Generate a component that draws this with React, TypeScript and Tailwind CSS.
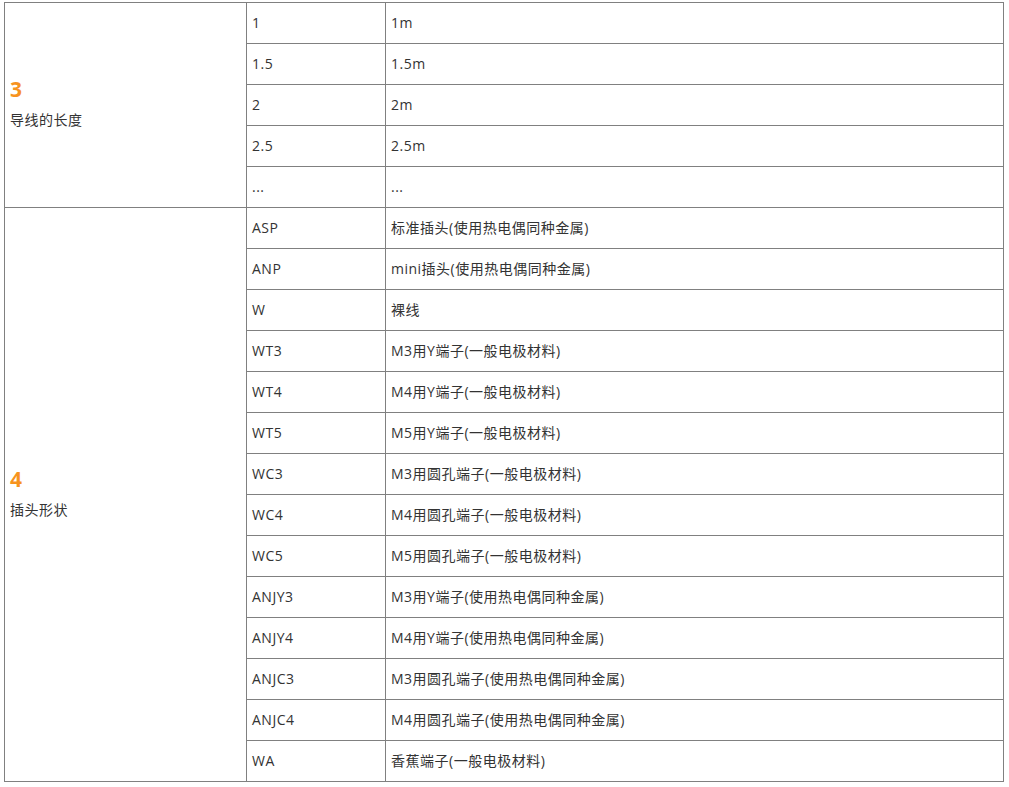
const lengthRows = [
  ['1', '1m'],
  ['1.5', '1.5m'],
  ['2', '2m'],
  ['2.5', '2.5m'],
  ['...', '...'],
]

const plugRows = [
  ['ASP', '标准插头(使用热电偶同种金属)'],
  ['ANP', 'mini插头(使用热电偶同种金属)'],
  ['W', '裸线'],
  ['WT3', 'M3用Y端子(一般电极材料)'],
  ['WT4', 'M4用Y端子(一般电极材料)'],
  ['WT5', 'M5用Y端子(一般电极材料)'],
  ['WC3', 'M3用圆孔端子(一般电极材料)'],
  ['WC4', 'M4用圆孔端子(一般电极材料)'],
  ['WC5', 'M5用圆孔端子(一般电极材料)'],
  ['ANJY3', 'M3用Y端子(使用热电偶同种金属)'],
  ['ANJY4', 'M4用Y端子(使用热电偶同种金属)'],
  ['ANJC3', 'M3用圆孔端子(使用热电偶同种金属)'],
  ['ANJC4', 'M4用圆孔端子(使用热电偶同种金属)'],
  ['WA', '香蕉端子(一般电极材料)'],
]

const cell = 'border border-[#808080] h-[41px] px-[5px] pb-[2px] align-middle'

function Group({
  num,
  label,
  rows,
}: {
  num: string
  label: string
  rows: string[][]
}) {
  return (
    <>
      {rows.map(([code, desc], i) => (
        <tr key={code + i}>
          {i === 0 && (
            <td rowSpan={rows.length} className="border border-[#808080] px-[5px] pb-[4px] align-middle">
              <div className="mb-[4px] text-[21px] leading-[30px] font-bold text-[#f7931e]">{num}</div>
              <div className="leading-[24px]">{label}</div>
            </td>
          )}
          <td className={cell}>{code}</td>
          <td className={cell}>{desc}</td>
        </tr>
      ))}
    </>
  )
}

export default function App() {
  return (
    <div
      className="min-h-screen bg-white pt-[2px] pl-[4px] text-[14px] tracking-[0.5px] text-[#333333]"
      style={{ fontFamily: '"Open Sans", "Noto Sans CJK SC", sans-serif' }}
    >
      <table className="w-[1000px] table-fixed border-collapse">
        <colgroup>
          <col className="w-[242px]" />
          <col className="w-[139px]" />
          <col />
        </colgroup>
        <tbody>
          <Group num="3" label="导线的长度" rows={lengthRows} />
          <Group num="4" label="插头形状" rows={plugRows} />
        </tbody>
      </table>
    </div>
  )
}
